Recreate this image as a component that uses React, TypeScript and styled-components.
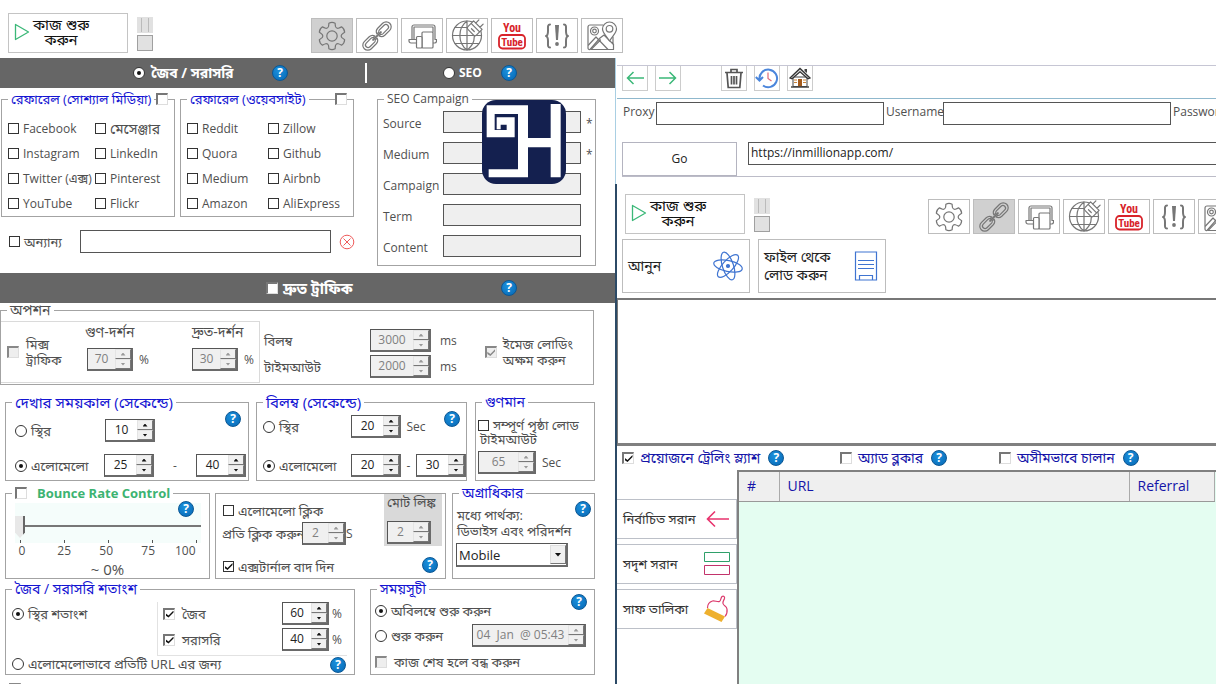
import React from 'react';
import styled, { createGlobalStyle, css } from 'styled-components';

const GlobalStyle = createGlobalStyle`
  * { box-sizing: border-box; }
  body {
    margin: 0;
    background: #fff;
    color: #4f4f4f;
    font: 12px/16px "Open Sans", "Noto Sans", "Noto Sans Bengali", sans-serif;
    overflow: hidden;
  }
  button, input, select, textarea { font: inherit; color: inherit; margin: 0; border-radius: 0; }
`;

const sunken = css`
  border: 1px solid #555;
  border-right: 2px solid #6a6a6a;
  border-bottom: 2px solid #6a6a6a;
`;

/* ---------- page frame ---------- */

const Page = styled.div`
  display: flex;
  height: 100vh;
  overflow: hidden;
`;

const LeftPane = styled.main`
  flex: 0 0 615px;
  min-width: 0;
  position: relative;
  z-index: 1;
`;

const RightPane = styled.section`
  flex: 1;
  min-width: 0;
  display: flex;
  flex-direction: column;
  padding-top: 58px;
`;

const Browser = styled.div`
  height: 126px;
  border-left: 1px solid #a9cfe3;
  padding-left: 1px;
`;

const Work = styled.div`
  flex: 1;
  min-height: 0;
  display: flex;
  flex-direction: column;
  border-left: 2px solid #2c4a66;
`;

const Band = styled.header`
  display: flex;
  align-items: center;
  height: 30px;
  background: #666;
  color: #fff;
  font-weight: 700;
`;

const BandHalf = styled.div<{ $pad: number; $w: number }>`
  display: flex;
  align-items: center;
  justify-content: space-between;
  width: ${(p) => p.$w}px;
  margin-left: ${(p) => p.$pad}px;
`;

const BandRule = styled.span`
  width: 2px;
  height: 20px;
  margin-left: 77px;
  background: #fff;
`;

/* ---------- form parts ---------- */

const Box = styled.input.attrs({ type: 'checkbox' })<{ $dim?: boolean; $soft?: boolean }>`
  appearance: none;
  flex: none;
  width: 11px;
  height: 11px;
  display: grid;
  place-items: center;
  background: #fff;
  border: 1px solid #333;
  ${(p) => p.$soft && css`width: 12px; height: 12px; border: 2px solid #777; border-right: 1px solid #ddd; border-bottom: 1px solid #ddd;`}
  ${(p) => p.$dim && css`width: 12px; height: 12px; background: #eee; border: 2px solid #888; border-right: 1px solid #ddd; border-bottom: 1px solid #ddd;`}
  &:checked::after {
    content: '';
    width: 8px;
    height: 7px;
    background: ${(p) => (p.$dim ? '#888' : '#111')};
    clip-path: polygon(0 40%, 38% 70%, 100% 0, 100% 30%, 38% 100%, 0 70%);
  }
`;

const Dot = styled.input.attrs({ type: 'radio' })`
  appearance: none;
  flex: none;
  width: 12px;
  height: 12px;
  display: grid;
  place-items: center;
  background: #fff;
  border: 1px solid #333;
  border-radius: 50%;
  &:checked::after {
    content: '';
    width: 4px;
    height: 4px;
    border-radius: 50%;
    background: #111;
  }
`;

const Choice = styled.label<{ $gap?: number; $size?: number; $color?: string }>`
  display: flex;
  align-items: center;
  gap: ${(p) => p.$gap ?? 4}px;
  font-size: ${(p) => p.$size ?? 12}px;
  color: ${(p) => p.$color ?? 'inherit'};
  white-space: nowrap;
`;

const SpinFrame = styled.span<{ $w: number; $off?: boolean }>`
  ${sunken}
  display: inline-flex;
  flex: none;
  width: ${(p) => p.$w}px;
  height: 23px;
  background: ${(p) => (p.$off ? '#f0f0f0' : '#fff')};
  color: ${(p) => (p.$off ? '#808080' : '#222')};
  input {
    flex: 1;
    width: 0;
    min-width: 0;
    padding: 0;
    border: 0;
    background: none;
    text-align: center;
    font-size: 12px;
  }
`;

const SpinKeys = styled.span`
  display: grid;
  grid-template-rows: 1fr 1fr;
  width: 16px;
`;

const SpinKey = styled.button<{ $off?: boolean; $down?: boolean }>`
  display: grid;
  place-items: center;
  padding: 0;
  border: 1px solid #e4e4e4;
  border-right-color: #777;
  border-bottom-color: #777;
  background: #f0f0f0;
  min-height: 0;
  &::after {
    content: '';
    width: 5px;
    height: 3px;
    background: ${(p) => (p.$off ? '#999' : '#111')};
    clip-path: ${(p) => (p.$down ? 'polygon(0 0, 100% 0, 50% 100%)' : 'polygon(50% 0, 100% 100%, 0 100%)')};
  }
`;

function Spin({ value, w = 50, off, label }: { value: string; w?: number; off?: boolean; label: string }) {
  return (
    <SpinFrame $w={w} $off={off}>
      <input aria-label={label} defaultValue={value} readOnly={off} />
      <SpinKeys>
        <SpinKey type="button" aria-label="+" $off={off} />
        <SpinKey type="button" aria-label="-" $off={off} $down />
      </SpinKeys>
    </SpinFrame>
  );
}

const HelpButton = styled.button<{ $top?: number; $right?: number }>`
  ${(p) => p.$top !== undefined && css`position: absolute; top: ${p.$top}px; right: ${p.$right}px;`}
  flex: none;
  width: 16px;
  height: 16px;
  padding: 0;
  border: 1px solid #0b5794;
  border-radius: 50%;
  background: radial-gradient(circle at 40% 35%, #1a90dc, #0767b4);
  color: #fff;
  font-weight: 700;
  font-size: 12px;
  line-height: 14px;
  text-align: center;
`;

const Help = (p: { top?: number; right?: number }) => (
  <HelpButton type="button" aria-label="?" $top={p.top} $right={p.right}>?</HelpButton>
);

const Group = styled.fieldset<{ $w?: number; $h: number; $mt?: number; $ml?: number }>`
  position: relative;
  flex: none;
  min-width: 0;
  width: ${(p) => (p.$w ? `${p.$w}px` : 'auto')};
  height: ${(p) => p.$h}px;
  margin: ${(p) => p.$mt ?? 0}px 0 0 ${(p) => p.$ml ?? 0}px;
  padding: 0;
  border: 1px solid #a3a3a3;
`;

const Legend = styled.legend<{ $color?: string; $h?: number; $size?: number; $ml?: number }>`
  display: flex;
  align-items: center;
  height: ${(p) => p.$h ?? 18}px;
  margin-left: ${(p) => p.$ml ?? 6}px;
  padding: 0 3px;
  line-height: 20px;
  font-size: ${(p) => p.$size ?? 14}px;
  color: ${(p) => p.$color ?? '#1414d2'};
  white-space: nowrap;
`;

const LegendBox = styled.span<{ $right: number }>`
  position: absolute;
  top: -15px;
  right: ${(p) => p.$right}px;
  display: flex;
  background: #fff;
`;

const Row = styled.div<{ $h?: number; $mt?: number; $pl?: number; $gap?: number }>`
  display: flex;
  align-items: center;
  height: ${(p) => p.$h ?? 23}px;
  margin-top: ${(p) => p.$mt ?? 0}px;
  padding-left: ${(p) => p.$pl ?? 0}px;
  gap: ${(p) => p.$gap ?? 0}px;
  white-space: nowrap;
`;

const Cell = styled.span<{ $w?: number; $size?: number; $center?: boolean }>`
  flex: none;
  width: ${(p) => (p.$w ? `${p.$w}px` : 'auto')};
  font-size: ${(p) => p.$size ?? 12}px;
  text-align: ${(p) => (p.$center ? 'center' : 'left')};
  white-space: nowrap;
`;

const Groups = styled.div<{ $mt: number; $pl?: number }>`
  display: flex;
  align-items: flex-start;
  margin-top: ${(p) => p.$mt}px;
  padding-left: ${(p) => p.$pl ?? 0}px;
`;

const SourceGrid = styled.div<{ $first: number }>`
  display: grid;
  grid-template-columns: ${(p) => p.$first}px 1fr;
  grid-auto-rows: 25px;
  padding: 8px 0 0 6px;
`;

const TextBox = styled.input<{ $off?: boolean }>`
  height: 23px;
  min-width: 0;
  padding: 0 2px;
  border: 1px solid #555;
  background: ${(p) => (p.$off ? '#efefef' : '#fff')};
`;

/* ---------- tool strip ---------- */

const StripRow = styled.div`
  display: flex;
  align-items: flex-end;
  padding-left: 8px;
`;

const StartButton = styled.button`
  display: flex;
  align-items: center;
  flex: none;
  width: 120px;
  height: 40px;
  padding: 0 0 2px 5px;
  border: 1px solid #c4c4c4;
  background: #fff;
  color: #111;
  font-size: 15px;
  line-height: 15px;
  text-align: center;
  span { width: 62px; }
`;

const StateKeys = styled.div`
  display: grid;
  gap: 2px;
  margin: 0 158px 2px 9px;
`;

const StateKey = styled.button<{ $pause?: boolean }>`
  width: 16px;
  height: 16px;
  padding: 0;
  border: 1px solid #a0a0a0;
  background: #e1e1e1;
  ${(p) => p.$pause && css`border-color: #e1e1e1; background: linear-gradient(90deg, #e1e1e1 3px, #bbb 3px 4px, #e1e1e1 4px 10px, #bbb 10px 11px, #e1e1e1 11px);`}
`;

const Tools = styled.nav`
  display: flex;
  gap: 3px;
`;

const Tool = styled.button<{ $on?: boolean }>`
  flex: none;
  width: 42px;
  height: 35px;
  padding: 0;
  display: grid;
  place-items: center;
  border: 1px solid #bdbdbd;
  background: ${(p) => (p.$on ? '#d0d0d0' : '#fff')};
`;

const Ink = styled.svg`
  display: block;
  fill: none;
  stroke: #767676;
  stroke-width: 1.2;
  stroke-linejoin: round;
  stroke-linecap: round;
`;

const gearPath = (() => {
  const pts: string[] = [];
  for (let i = 0; i < 6; i++) {
    const a = (i * Math.PI) / 3 - Math.PI / 2;
    const at = (r: number, d: number) => `${(15 + r * Math.cos(a + d)).toFixed(2)} ${(15 + r * Math.sin(a + d)).toFixed(2)}`;
    pts.push(`${i ? 'L' : 'M'}${at(10, -0.36)} Q${at(11.5, -0.28)} ${at(13.2, -0.24)} Q${at(14.4, 0)} ${at(13.2, 0.24)} Q${at(11.5, 0.28)} ${at(10, 0.36)} Q${at(8.6, 0.52)} ${at(10, 0.687)}`);
  }
  return pts.join(' ') + 'Z';
})();

const GearIcon = () => (
  <Ink width="30" height="30" viewBox="0 0 30 30"><path d={gearPath} /><circle cx="15" cy="15" r="5.2" /></Ink>
);

const LinkIcon = () => (
  <Ink width="30" height="30" viewBox="0 0 30 30">
    <g transform="rotate(-45 15 15)">
      <path d="M13.600 16.500a5 5 0 0 1-4.600 3.500H2a5 5 0 0 1 0-10h7a5 5 0 0 1 4.600 3.500H11A2.600 2.600 0 0 0 9 12.400H2.400a2.600 2.600 0 0 0 0 5.200H9a2.600 2.600 0 0 0 2-1.100z" />
      <path d="M16.400 16.500a5 5 0 0 0 4.600 3.500h7a5 5 0 0 0 0-10h-7a5 5 0 0 0-4.600 3.500H19a2.600 2.600 0 0 1 2-1.100h6.600a2.600 2.600 0 0 1 0 5.200H21a2.600 2.600 0 0 1-2-1.100z" />
      <path d="M9.500 15h11" strokeWidth="2" />
    </g>
  </Ink>
);

const DevicesIcon = () => (
  <Ink width="30" height="28" viewBox="0 0 30 28">
    <path d="M9.500 21H4a2 2 0 0 1-2-2v-1.500h3V5a2 2 0 0 1 2-2h19a2 2 0 0 1 2 2v12.500h1.500V19a2 2 0 0 1-2 2H26M7 17.500V5h19v5M5 17.500h4.500" />
    <rect x="15" y="10" width="11" height="16" rx="1" fill="#fff" />
    <rect x="9.500" y="14.500" width="5.500" height="11.500" rx="1" fill="#fff" />
  </Ink>
);

const GlobeIcon = () => (
  <Ink width="34" height="33" viewBox="0 0 34 33">
    <circle cx="17" cy="16.500" r="14.500" />
    <path d="M17 2v29M2.500 16.500h29M5 8.500h17M5 24.500h24M17 2c-9.500 7-9.500 22 0 29M17 31c7-5 9-13 6.500-20" />
    <g transform="rotate(45 25 9)">
      <path fill="#fff" d="M19 5h12v8a2 2 0 0 1-2 2h-8a2 2 0 0 1-2-2zM22 5V.5M28 5V.5M19 8.500h12M23 12h4" />
    </g>
  </Ink>
);

const YouTubeIcon = () => (
  <svg width="30" height="31" viewBox="0 0 30 31">
    <g fontFamily='"Liberation Sans Narrow", "Roboto Condensed", "Liberation Sans", sans-serif' fontWeight="700" fontSize="12" textAnchor="middle" fill="#d8232a">
      <text x="15" y="12">You</text>
      <text x="15" y="26" fontSize="11">Tube</text>
    </g>
    <rect x="2" y="15" width="26" height="13.500" rx="3.500" fill="none" stroke="#d8232a" strokeWidth="1.800" />
  </svg>
);

const BracesIcon = () => (
  <Ink width="26" height="26" viewBox="0 0 26 26">
    <path strokeWidth="2" d="M6 1.500C3.500 1.500 4 4 4 7s.2 5.500-2 6c2.200.5 2 3 2 6s-.5 5.500 2 5.500M20 1.500c2.500 0 2 2.500 2 5.500s-.2 5.500 2 6c-2.200.5-2 3-2 6s.5 5.500-2 5.500" />
    <path fill="#767676" stroke="none" d="M11 2h4l-1 15h-2z" />
    <circle cx="13" cy="21" r="1.900" fill="#767676" stroke="none" />
  </Ink>
);

const MapIcon = () => (
  <Ink width="32" height="30" viewBox="0 0 32 30">
    <path d="M17 4H4a2 2 0 0 0-2 2v21a1.500 1.500 0 0 0 2 1.500L14 17l4-3 9 9v-7" />
    <path d="M2.500 24L10 16l12 12.500H5L14.500 19M22 28.500h5.500V23" />
    <path fill="#fff" d="M23.500 20c-4-6-7-8.500-7-12a7 7 0 0 1 14 0c0 3.500-3 6-7 12z" />
    <circle cx="23.500" cy="7.800" r="3.300" />
    <circle cx="8.500" cy="10" r="4" /><circle cx="8.500" cy="10" r="1.800" />
  </Ink>
);

const toolIcons = [
  { name: 'সেটিংস', Icon: GearIcon },
  { name: 'লিঙ্ক', Icon: LinkIcon },
  { name: 'ডিভাইস', Icon: DevicesIcon },
  { name: 'প্রক্সি', Icon: GlobeIcon },
  { name: 'YouTube', Icon: YouTubeIcon },
  { name: 'কোড', Icon: BracesIcon },
  { name: 'মানচিত্র', Icon: MapIcon },
];

function ToolStrip({ active }: { active: number }) {
  return (
    <StripRow>
      <StartButton type="button">
        <svg width="16" height="18" viewBox="0 0 16 18" fill="none" stroke="#3bb878" strokeWidth="1.300" strokeLinejoin="round"><path d="M1.500 1.500L14.500 9L1.500 16.500z" /></svg>
        <span>কাজ শুরু করুন</span>
      </StartButton>
      <StateKeys>
        <StateKey type="button" aria-label="বিরতি" $pause />
        <StateKey type="button" aria-label="থামান" />
      </StateKeys>
      <Tools>
        {toolIcons.map(({ name, Icon }, i) => (
          <Tool key={name} type="button" aria-label={name} $on={i === active}><Icon /></Tool>
        ))}
      </Tools>
    </StripRow>
  );
}

const TopSpace = styled.div`
  padding: 13px 0 5px;
`;

/* ---------- left pane sections ---------- */

const SeoGrid = styled.div`
  display: grid;
  grid-template-columns: 60px 138px 1fr;
  grid-auto-rows: 22px;
  row-gap: 9px;
  align-items: center;
  padding: 3px 0 0 5px;
  label { padding-top: 4px; }
  span { padding: 4px 0 0 5px; }
  input { width: 100%; height: 22px; }
`;

const Logo = styled.svg`
  position: absolute;
  top: -8px;
  right: 29px;
`;

const SeoGroup = ({ children }: { children: React.ReactNode }) => (
  <Group $w={219} $h={176} $ml={22}>{children}</Group>
);

const LogoMark = () => (
  <Logo width="84" height="84" viewBox="0 0 252 252">
    <rect width="252" height="252" rx="42" fill="#14204f" />
    <path fill="#fff" d="M14 16H138V114H206V12H236V232H206V142H138V232H20V208H108V42H38V90H74V74H56V88H44V52H98V112H14z" />
  </Logo>
);

const MixBox = styled.div`
  display: flex;
  width: 259px;
  height: 62px;
  margin-top: 4px;
  border: 1px solid #dadada;
  border-left: 0;
`;

const Stack = styled.div<{ $w?: number; $ml?: number; $pt?: number; $gap?: number }>`
  display: flex;
  flex-direction: column;
  flex: none;
  width: ${(p) => (p.$w ? `${p.$w}px` : 'auto')};
  margin-left: ${(p) => p.$ml ?? 0}px;
  padding-top: ${(p) => p.$pt ?? 0}px;
  gap: ${(p) => p.$gap ?? 0}px;
`;

const RatePanel = styled.div`
  height: 40px;
  margin: 1px 8px 0 9px;
  padding-top: 13px;
  background:
    repeating-linear-gradient(90deg, #555 0 1px, transparent 1px 44px) 5px 100% / 177px 3px no-repeat,
    #f5fdfb;
`;

const Range = styled.input.attrs({ type: 'range' })`
  appearance: none;
  display: block;
  width: 100%;
  height: 22px;
  background: linear-gradient(#777, #777) 0 9px / 100% 2px no-repeat;
  &::-webkit-slider-thumb {
    appearance: none;
    width: 10px;
    height: 22px;
    background: linear-gradient(90deg, #e8e8e8 8px, #666 8px);
    clip-path: polygon(0 0, 100% 0, 100% 75%, 50% 100%, 0 75%);
  }
`;

const Ticks = styled.div`
  display: grid;
  grid-template-columns: 14px 28px 28px 28px 1fr;
  column-gap: 14px;
  padding-left: 9px;
  text-align: center;
  span:not(:first-child) { text-align: right; }
  span:last-child { text-align: left; padding-left: 6px; }
`;

const Readout = styled.output`
  display: block;
  text-align: center;
  font-size: 15px;
  line-height: 20px;
`;

const LinkTotal = styled.div`
  position: absolute;
  top: 0;
  right: 3px;
  width: 58px;
  height: 52px;
  padding: 0 0 0 3px;
  background: #d9d9d9;
`;

const Cut = styled.div`
  display: flex;
  align-items: flex-end;
  height: 12px;
  padding-left: 4px;
  overflow: hidden;
  line-height: 12px;
  font-size: 13px;
`;

const PickerRow = styled.div`
  padding: 4px 0 0 3px;
`;

const Picker = styled.div`
  ${sunken}
  position: relative;
  width: 112px;
  height: 24px;
  select {
    appearance: none;
    width: 100%;
    height: 100%;
    padding: 0 2px;
    border: 0;
    background: #fff;
    color: #222;
    font-size: 13px;
  }
  span {
    position: absolute;
    top: 1px;
    right: 0;
    width: 16px;
    height: 19px;
    display: grid;
    place-items: center;
    background: #f0f0f0;
    border: 1px solid #ddd;
    border-right-color: #777;
    border-bottom-color: #777;
    pointer-events: none;
  }
  span::after {
    content: '';
    width: 7px;
    height: 4px;
    background: #111;
    clip-path: polygon(0 0, 100% 0, 50% 100%);
  }
`;

const Shares = styled.div`
  width: 190px;
  height: 54px;
  border: 1px solid #e2e2e2;
  border-width: 0 0 1px 1px;
  padding-left: 5px;
`;

const ShareRow = styled.div`
  display: grid;
  grid-template-columns: 119px 50px 1fr;
  align-items: center;
  height: 23px;
  & + & { margin-top: 3px; }
`;

const Prose = styled.p`
  margin: 0;
  padding: 5px 0 0 4px;
  font-size: 13px;
  line-height: 16px;
  white-space: nowrap;
`;

const social = ['Facebook', 'মেসেঞ্জার', 'Instagram', 'LinkedIn', 'Twitter (এক্স)', 'Pinterest', 'YouTube', 'Flickr'];
const sites = ['Reddit', 'Zillow', 'Quora', 'Github', 'Medium', 'Airbnb', 'Amazon', 'AliExpress'];
const seoFields = [['Source', '*'], ['Medium', '*'], ['Campaign', ''], ['Term', ''], ['Content', '']];

function Traffic() {
  return (
    <LeftPane>
      <TopSpace><ToolStrip active={0} /></TopSpace>
      <Band>
        <BandHalf $pad={133} $w={155}>
          <Choice $gap={6} $size={14}><Dot name="source" defaultChecked />জৈব / সরাসরি</Choice>
          <Help />
        </BandHalf>
        <BandRule />
        <BandHalf $pad={76} $w={74}>
          <Choice><Dot name="source" />SEO</Choice>
          <Help />
        </BandHalf>
      </Band>

      <Groups $mt={2}>
        <Stack>
          <Groups $mt={0}>
            <Group $w={174} $h={127} $ml={1}>
              <Legend $size={13}>রেফারেল (সোশ্যাল মিডিয়া)</Legend>
              <LegendBox $right={6}><Box aria-label="রেফারেল (সোশ্যাল মিডিয়া)" $soft /></LegendBox>
              <SourceGrid $first={87}>
                {social.map((s) => <Choice key={s} $size={s === 'মেসেঞ্জার' ? 14 : 12}><Box />{s}</Choice>)}
              </SourceGrid>
            </Group>
            <Group $w={174} $h={127} $ml={5}>
              <Legend $size={13}>রেফারেল (ওয়েবসাইট)</Legend>
              <LegendBox $right={6}><Box aria-label="রেফারেল (ওয়েবসাইট)" $soft /></LegendBox>
              <SourceGrid $first={81}>
                {sites.map((s) => <Choice key={s}><Box />{s}</Choice>)}
              </SourceGrid>
            </Group>
          </Groups>
          <Row $mt={13} $pl={9}>
            <Cell $w={71}><Choice $size={13}><Box />অন্যান্য</Choice></Cell>
            <OtherBox aria-label="অন্যান্য" />
            <ClearButton type="button" aria-label="মুছুন">
              <svg width="16" height="16" viewBox="0 0 16 16" fill="none" stroke="#ee5a5a"><circle cx="8" cy="8" r="6.800" /><path d="M4.500 4.500l7 7M11.500 4.500l-7 7" /></svg>
            </ClearButton>
          </Row>
        </Stack>
        <SeoGroup>
          <Legend $color="#4f4f4f" $size={12}>SEO Campaign</Legend>
          <SeoGrid>
            {seoFields.map(([name, mark]) => (
              <React.Fragment key={name}>
                <label htmlFor={name}>{name}</label>
                <TextBox id={name} $off readOnly />
                <span>{mark}</span>
              </React.Fragment>
            ))}
          </SeoGrid>
          <LogoMark />
        </SeoGroup>
      </Groups>

      <FastBand>
        <BandHalf $pad={266} $w={251}>
          <Choice $size={15} $gap={5}><Box $soft />দ্রুত ট্রাফিক</Choice>
          <Help />
        </BandHalf>
      </FastBand>

      <Group $w={594} $h={82}>
        <Legend $color="#4f4f4f" $h={14} $size={14}>অপশন</Legend>
        <OptionRow>
          <MixBox>
            <Cell $w={84}>
              <MixLabel><Box $dim /><span>মিক্স<br />ট্রাফিক</span></MixLabel>
            </Cell>
            <Stack $w={107} $pt={2} $gap={8}>
              <Cell $size={14}>গুণ-দর্শন</Cell>
              <Row $gap={6} $pl={2}><Spin w={46} off value="70" label="গুণ-দর্শন" />%</Row>
            </Stack>
            <Stack $pt={2} $gap={8}>
              <Cell $size={14}>দ্রুত-দর্শন</Cell>
              <Row $gap={6}><Spin w={46} off value="30" label="দ্রুত-দর্শন" />%</Row>
            </Stack>
          </MixBox>
          <Stack $ml={4} $pt={12} $gap={3}>
            <Row><Cell $w={106} $size={13}>বিলম্ব</Cell><Cell $w={70}><Spin w={61} off value="3000" label="বিলম্ব" /></Cell>ms</Row>
            <Row><Cell $w={106} $size={13}>টাইমআউট</Cell><Cell $w={70}><Spin w={61} off value="2000" label="টাইমআউট" /></Cell>ms</Row>
          </Stack>
          <ImageLabel><Box $dim defaultChecked /><span>ইমেজ লোডিং<br />অক্ষম করুন</span></ImageLabel>
        </OptionRow>
      </Group>

      <Groups $mt={8} $pl={5}>
        <Group $w={244} $h={88}>
          <Legend $size={15}>দেখার সময়কাল (সেকেন্ডে)</Legend>
          <Row $mt={8} $pl={9}><Cell $w={90}><Choice $size={13}><Dot name="view" />স্থির</Choice></Cell><Spin value="10" label="স্থির" /></Row>
          <Row $mt={12} $pl={9}>
            <Cell $w={89}><Choice $size={13}><Dot name="view" defaultChecked />এলোমেলো</Choice></Cell>
            <Spin value="25" label="সর্বনিম্ন" /><Cell $w={42} $center>-</Cell><Spin value="40" label="সর্বোচ্চ" />
          </Row>
          <Help top={0} right={7} />
        </Group>
        <Group $w={211} $h={88} $ml={7}>
          <Legend $size={15}>বিলম্ব (সেকেন্ডে)</Legend>
          <Row $mt={4} $pl={6}><Cell $w={88}><Choice $size={13}><Dot name="wait" />স্থির</Choice></Cell><Spin value="20" label="স্থির" /><Cell $w={30} $center>Sec</Cell></Row>
          <Row $mt={16} $pl={6}>
            <Cell $w={88}><Choice $size={13}><Dot name="wait" defaultChecked />এলোমেলো</Choice></Cell>
            <Spin value="20" label="সর্বনিম্ন" /><Cell $w={15} $center>-</Cell><Spin value="30" label="সর্বোচ্চ" />
          </Row>
          <Help top={0} right={6} />
        </Group>
        <Group $w={120} $h={88} $ml={8}>
          <Legend>গুণমান</Legend>
          <Row $h={16} $mt={6} $pl={2}><Choice $size={13}><Box />সম্পূর্ণ পৃষ্ঠা লোড</Choice></Row>
          <Cut>টাইমআউট</Cut>
          <Row $mt={6} $pl={2} $gap={6}><Spin w={58} off value="65" label="টাইমআউট" />Sec</Row>
        </Group>
      </Groups>

      <Groups $mt={3} $pl={5}>
        <Group $w={205} $h={95}>
          <Legend $color="#3cb371" $size={13} $ml={6}>
            <Choice $gap={10} $size={13}><Box $soft /><b>Bounce Rate Control</b></Choice>
          </Legend>
          <RatePanel><Range aria-label="Bounce Rate" min={0} max={100} defaultValue={0} /></RatePanel>
          <Ticks><span>0</span><span>25</span><span>50</span><span>75</span><span>100</span></Ticks>
          <Readout>~ 0%</Readout>
          <Help top={-1} right={15} />
        </Group>
        <Group $w={231} $h={86} $ml={5} $mt={9}>
          <Row $mt={5} $pl={7}><Choice $size={13}><Box />এলোমেলো ক্লিক</Choice></Row>
          <Row $pl={6}><Cell $w={80} $size={13}>প্রতি ক্লিক করুন</Cell><Spin w={44} off value="2" label="প্রতি ক্লিক করুন" />S</Row>
          <Row $mt={10} $pl={7}><Choice $size={13}><Box defaultChecked />এক্সটার্নাল বাদ দিন</Choice></Row>
          <LinkTotal>
            <Row $h={16}><Cell $size={13}>মোট লিঙ্ক</Cell></Row>
            <Row $mt={11}><Spin w={44} off value="2" label="মোট লিঙ্ক" /></Row>
          </LinkTotal>
          <Help top={63} right={7} />
        </Group>
        <Group $w={143} $h={95} $ml={6}>
          <Legend>অগ্রাধিকার</Legend>
          <Prose>মধ্যে পার্থক্য:<br />ডিভাইস এবং পরিদর্শন</Prose>
          <PickerRow>
            <Picker>
              <select aria-label="অগ্রাধিকার" defaultValue="Mobile"><option>Mobile</option><option>Desktop</option></select>
              <span />
            </Picker>
          </PickerRow>
          <Help top={-1} right={3} />
        </Group>
      </Groups>

      <Groups $mt={1} $pl={5}>
        <Group $w={350} $h={95}>
          <Legend>জৈব / সরাসরি শতাংশ</Legend>
          <Groups $mt={4} $pl={6}>
            <Cell $w={145}><Row><Choice $size={13}><Dot name="share" defaultChecked />স্থির শতাংশ</Choice></Row></Cell>
            <Shares>
              <ShareRow><Choice $gap={7} $size={13}><Box $soft defaultChecked />জৈব</Choice><Spin w={47} value="60" label="জৈব" />%</ShareRow>
              <ShareRow><Choice $gap={7} $size={13}><Box $soft defaultChecked />সরাসরি</Choice><Spin w={47} value="40" label="সরাসরি" />%</ShareRow>
            </Shares>
          </Groups>
          <Row $h={16} $pl={6}><Choice $size={13}><Dot name="share" />এলোমেলোভাবে প্রতিটি URL এর জন্য</Choice></Row>
          <Help top={59} right={8} />
        </Group>
        <Group $w={225} $h={95} $ml={15}>
          <Legend>সময়সূচী</Legend>
          <Row $mt={1} $pl={4}><Choice $size={13}><Dot name="when" defaultChecked />অবিলম্বে শুরু করুন</Choice></Row>
          <Row $mt={2} $pl={4}><Cell $w={97}><Choice $size={13}><Dot name="when" />শুরু করুন</Choice></Cell><Spin w={114} off value="04  Jan  @ 05:43" label="শুরু করুন" /></Row>
          <Row $mt={3} $pl={4}><Choice $gap={7} $size={13}><Box $dim />কাজ শেষ হলে বন্ধ করুন</Choice></Row>
          <Help top={-4} right={7} />
        </Group>
      </Groups>
      <Row $mt={8} $pl={9} $h={11}><Box $dim aria-label="অতিরিক্ত" /></Row>
    </LeftPane>
  );
}

const OtherBox = styled(TextBox)`
  width: 251px;
`;

const FastBand = styled(Band)`
  margin-top: 7px;
`;

const OptionRow = styled.div`
  display: flex;
`;

const MixLabel = styled.label`
  display: flex;
  align-items: center;
  gap: 7px;
  padding: 14px 0 0 6px;
  font-size: 13px;
`;

const ImageLabel = styled(MixLabel)`
  gap: 6px;
  padding: 4px 0 0 28px;
`;

const ClearButton = styled.button`
  display: flex;
  margin-left: 8px;
  padding: 0;
  border: 0;
  background: none;
`;

/* ---------- right pane ---------- */

const NavRow = styled.div`
  display: flex;
  height: 34px;
  margin-top: 7px;
  padding-left: 5px;
  gap: 7px;
  border-top: 1px solid #c6c6d4;
  border-bottom: 1px solid #8fb8cd;
`;

const NavKey = styled.button<{ $ml?: number }>`
  display: grid;
  place-items: center;
  width: 26px;
  height: 25px;
  margin-left: ${(p) => p.$ml ?? 0}px;
  padding: 0;
  border: 1px solid #ccc;
  border-top: 0;
  background: #fff;
`;

const ProxyRow = styled.div`
  display: grid;
  grid-template-columns: 33px 228px 59px 228px 60px;
  align-items: center;
  height: 33px;
  padding: 0 0 4px 6px;
  white-space: nowrap;
  label { padding: 0 0 3px 2px; line-height: 16px; }
  label:first-child { padding-left: 0; }
`;

const AddressRow = styled.form`
  display: flex;
  margin: 10px 0 0 5px;
  border-bottom: 1px solid #bcbcc8;
`;

const GoButton = styled.button`
  width: 115px;
  height: 34px;
  margin-right: 11px;
  border: 1px solid #b4b4c0;
  background: #fff;
  color: #222;
`;

const Address = styled(TextBox)`
  flex: 1;
  margin-right: -2px;
  padding-bottom: 3px;
  color: #222;
`;

const LoadRow = styled.div`
  display: flex;
  gap: 8px;
  padding: 5px 0 5px 5px;
`;

const LoadButton = styled.button`
  display: flex;
  align-items: center;
  justify-content: space-between;
  width: 128px;
  height: 54px;
  padding: 0 5px;
  border: 1px solid #bdbdbd;
  background: #fff;
  color: #222;
  font-size: 14px;
  line-height: 18px;
  text-align: left;
`;

const Script = styled.textarea`
  display: block;
  flex: none;
  width: 100%;
  height: 148px;
  border: 0;
  border-top: 2px solid #777;
  border-left: 1px solid #777;
  border-bottom: 3px solid #808080;
  resize: none;
`;

const Flags = styled.div`
  display: grid;
  grid-template-columns: 218px 159px 1fr;
  align-items: center;
  flex: none;
  height: 24px;
  padding-left: 5px;
  color: #1414a8;
`;

const Flag = styled.div`
  display: flex;
  align-items: center;
  gap: 8px;
`;

const ListArea = styled.div`
  display: flex;
  flex: 1;
  min-height: 0;
`;

const SideKeys = styled.div`
  display: flex;
  flex-direction: column;
  flex: none;
  gap: 5px;
  width: 120px;
  padding-top: 29px;
`;

const SideKey = styled.button`
  display: flex;
  align-items: center;
  justify-content: space-between;
  height: 40px;
  padding: 0 5px 0 6px;
  border: 1px solid #bcc0c8;
  border-left: 0;
  background: #fff;
  color: #333;
  font-size: 13px;
`;

const ListFrame = styled.div`
  flex: 1;
  min-width: 0;
  overflow: hidden;
  background: #e4fdf1;
  border-top: 2px solid #808080;
  border-left: 2px solid #808080;
`;

const ListTable = styled.table`
  width: 476px;
  table-layout: fixed;
  border-collapse: collapse;
  th {
    height: 29px;
    padding: 0 8px;
    border-right: 1px solid #aaa;
    border-bottom: 1px solid #999;
    background: #efefef;
    color: #1414a8;
    font-weight: 400;
    font-size: 14px;
    text-align: left;
  }
`;

function Sender() {
  return (
    <RightPane>
      <Browser>
        <NavRow>
          <NavKey type="button" aria-label="পেছনে"><svg width="18" height="14" viewBox="0 0 18 14" fill="none" stroke="#3bb878" strokeWidth="1.500"><path d="M18 7H1.500M7.500 1L1.500 7l6 6" /></svg></NavKey>
          <NavKey type="button" aria-label="সামনে"><svg width="18" height="14" viewBox="0 0 18 14" fill="none" stroke="#3bb878" strokeWidth="1.500"><path d="M0 7h16.500M10.500 1l6 6l-6 6" /></svg></NavKey>
          <NavKey type="button" aria-label="মুছুন" $ml={33}>
            <svg width="20" height="21" viewBox="0 0 20 21" fill="none" stroke="#555" strokeWidth="1.700"><path d="M1 4.500h18M7 4V1.500h6V4M3 5l1.200 14.500h11.600L17 5M7.500 8v8.500M10 8v8.500M12.500 8v8.500" /></svg>
          </NavKey>
          <NavKey type="button" aria-label="ইতিহাস">
            <svg width="24" height="22" viewBox="0 0 24 22" fill="none" strokeWidth="2"><path stroke="#4b86dc" d="M4.500 12.500A8.800 8.800 0 1 1 8 18.500M.8 10l3.700 3.500L8 10" /><path stroke="#e06a7a" strokeWidth="1.200" d="M13 5.500V11.500l3.500 2.500" /></svg>
          </NavKey>
          <NavKey type="button" aria-label="হোম">
            <svg width="22" height="22" viewBox="0 0 22 22"><path fill="#fff" stroke="#444" d="M4 10h14v9.500H4z" /><path fill="#ddd" stroke="#333" strokeWidth="1.300" d="M1 11L11 1.500L21 11l-2 .8L11 4.800L3 11.800z" /><path fill="#444" d="M15.500 2h2.500v4l-2.500-2z" /><path fill="#a35a1c" d="M9 12h4v7.500H9z" /><path stroke="#c98238" strokeWidth="1.200" d="M5 13h3M5 15.500h3M14 13h3M14 15.500h3" /><path stroke="#444" strokeWidth="1.500" d="M2 20h18" /></svg>
          </NavKey>
        </NavRow>
        <ProxyRow>
          <label htmlFor="proxy">Proxy</label><TextBox id="proxy" />
          <label htmlFor="user">Username</label><TextBox id="user" />
          <label htmlFor="pass">Password</label>
          <input id="pass" type="password" hidden />
        </ProxyRow>
        <AddressRow>
          <GoButton type="button">Go</GoButton>
          <Address aria-label="URL" defaultValue="https://inmillionapp.com/" />
        </AddressRow>
      </Browser>
      <Work>
        <WorkStrip><ToolStrip active={1} /></WorkStrip>
        <LoadRow>
          <LoadButton type="button">আনুন
            <svg width="32" height="32" viewBox="0 0 32 32" fill="none" stroke="#3f74d1" strokeWidth="1.200"><g><ellipse cx="16" cy="16" rx="14.500" ry="5.500" transform="rotate(12 16 16)" /><ellipse cx="16" cy="16" rx="14.500" ry="5.500" transform="rotate(72 16 16)" /><ellipse cx="16" cy="16" rx="14.500" ry="5.500" transform="rotate(132 16 16)" /></g><circle cx="16" cy="16" r="1.500" fill="#3f74d1" /></svg>
          </LoadButton>
          <LoadButton type="button"><span>ফাইল থেকে<br />লোড করুন</span>
            <svg width="28" height="30" viewBox="0 0 28 30" fill="none" stroke="#3f74d1" strokeWidth="1.200"><path d="M3.500 1h21v28h-21zM6 9.500h16M6 13.500h16M6 17.500h16M7.500 29v-4.500h13V29" /></svg>
          </LoadButton>
        </LoadRow>
        <Script aria-label="লিঙ্ক তালিকা" />
        <Flags>
          <Flag><Choice $size={14} $gap={6}><Box $soft defaultChecked />প্রয়োজনে ট্রেলিং স্ল্যাশ</Choice><Help /></Flag>
          <Flag><Choice $size={14} $gap={6}><Box $soft />অ্যাড ব্লকার</Choice><Help /></Flag>
          <Flag><Choice $size={14} $gap={6}><Box $soft />অসীমভাবে চালান</Choice><Help /></Flag>
        </Flags>
        <ListArea>
          <SideKeys>
            <SideKey type="button">নির্বাচিত সরান
              <svg width="26" height="18" viewBox="0 0 26 18" fill="none" stroke="#e8336d" strokeWidth="1.600"><path d="M24 9H2.500M10 1.500L2.500 9l7.500 7.500" /></svg>
            </SideKey>
            <SideKey type="button">সদৃশ সরান
              <svg width="28" height="24" viewBox="0 0 28 24" fill="none"><path stroke="#2fa06a" d="M1.500.5h25v9h-25z" /><path stroke="#c2336b" d="M1.500 13.500h25v9h-25z" /></svg>
            </SideKey>
            <SideKey type="button">সাফ তালিকা
              <svg width="28" height="28" viewBox="0 0 28 28" fill="none"><path fill="#eeb02e" d="M4.500 13L22 21.500L18.500 27L1 18.500z" /><path stroke="#dc3a6c" strokeWidth="1.200" d="M4.500 13c0-3 1.500-6 5-7 2-.6 5 1.200 7 .5 1.500-.5 1-3.500 2.500-5 1.500-1 3 .3 2.500 2-.5 1.500-2 3-1.500 5 .5 2.500 3.500 2 4 5.500.5 3 0 5-2 7.500" /></svg>
            </SideKey>
          </SideKeys>
          <ListFrame>
            <ListTable>
              <colgroup><NumberCol /><UrlCol /><col /></colgroup>
              <thead><tr><th>#</th><th>URL</th><th>Referral</th></tr></thead>
            </ListTable>
          </ListFrame>
        </ListArea>
      </Work>
    </RightPane>
  );
}

const NumberCol = styled.col`
  width: 40px;
`;

const UrlCol = styled.col`
  width: 350px;
`;

const WorkStrip = styled.div`
  padding-top: 10px;
`;

export default function App() {
  return (
    <>
      <GlobalStyle />
      <Page>
        <Traffic />
        <Sender />
      </Page>
    </>
  );
}
